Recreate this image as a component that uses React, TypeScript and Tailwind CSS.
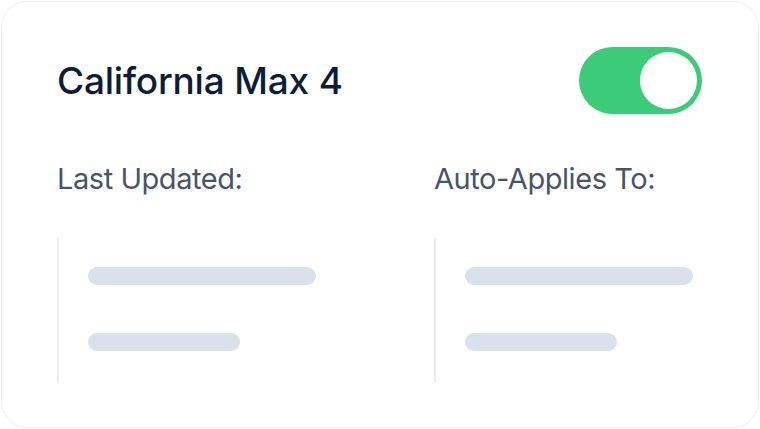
import React from "react";

function Column({ label }: { label: string }) {
  return (
    <div className="flex flex-col">
      <div className="text-[29px] leading-[34px] text-[#475569] tracking-[-0.45px]">{label}</div>
      <div className="mt-[42px] border-l-2 border-[#e9edf3] pl-[29px] pt-[29px] pb-[31px] flex flex-col gap-[48px]">
        <div className="h-[18px] w-[228px] rounded-full bg-[#dae1eb]" />
        <div className="h-[18px] w-[152px] rounded-full bg-[#dae1eb]" />
      </div>
    </div>
  );
}

export default function App() {
  return (
    <div className="w-[760px] h-[429px] bg-white p-[1px]" style={{ fontFamily: "Inter, 'Noto Sans', sans-serif" }}>
      <div className="w-[758px] h-[427px] rounded-[26px] border border-[#efefef] bg-white">
        <div className="flex items-center justify-between pl-[55px] pr-[56px] pt-[45px]">
          <div className="text-[37px] leading-[44px] font-medium text-[#0e1d36] tracking-[-0.2px]">California Max 4</div>
          <div className="w-[123px] h-[67px] rounded-full bg-[#3ccb78] flex items-center justify-end pr-[5px]">
            <div className="w-[57px] h-[57px] rounded-full bg-white" />
          </div>
        </div>
        <div className="grid grid-cols-[377px_1fr] pl-[55px] mt-[48px]">
          <Column label="Last Updated:" />
          <Column label="Auto-Applies To:" />
        </div>
      </div>
    </div>
  );
}
